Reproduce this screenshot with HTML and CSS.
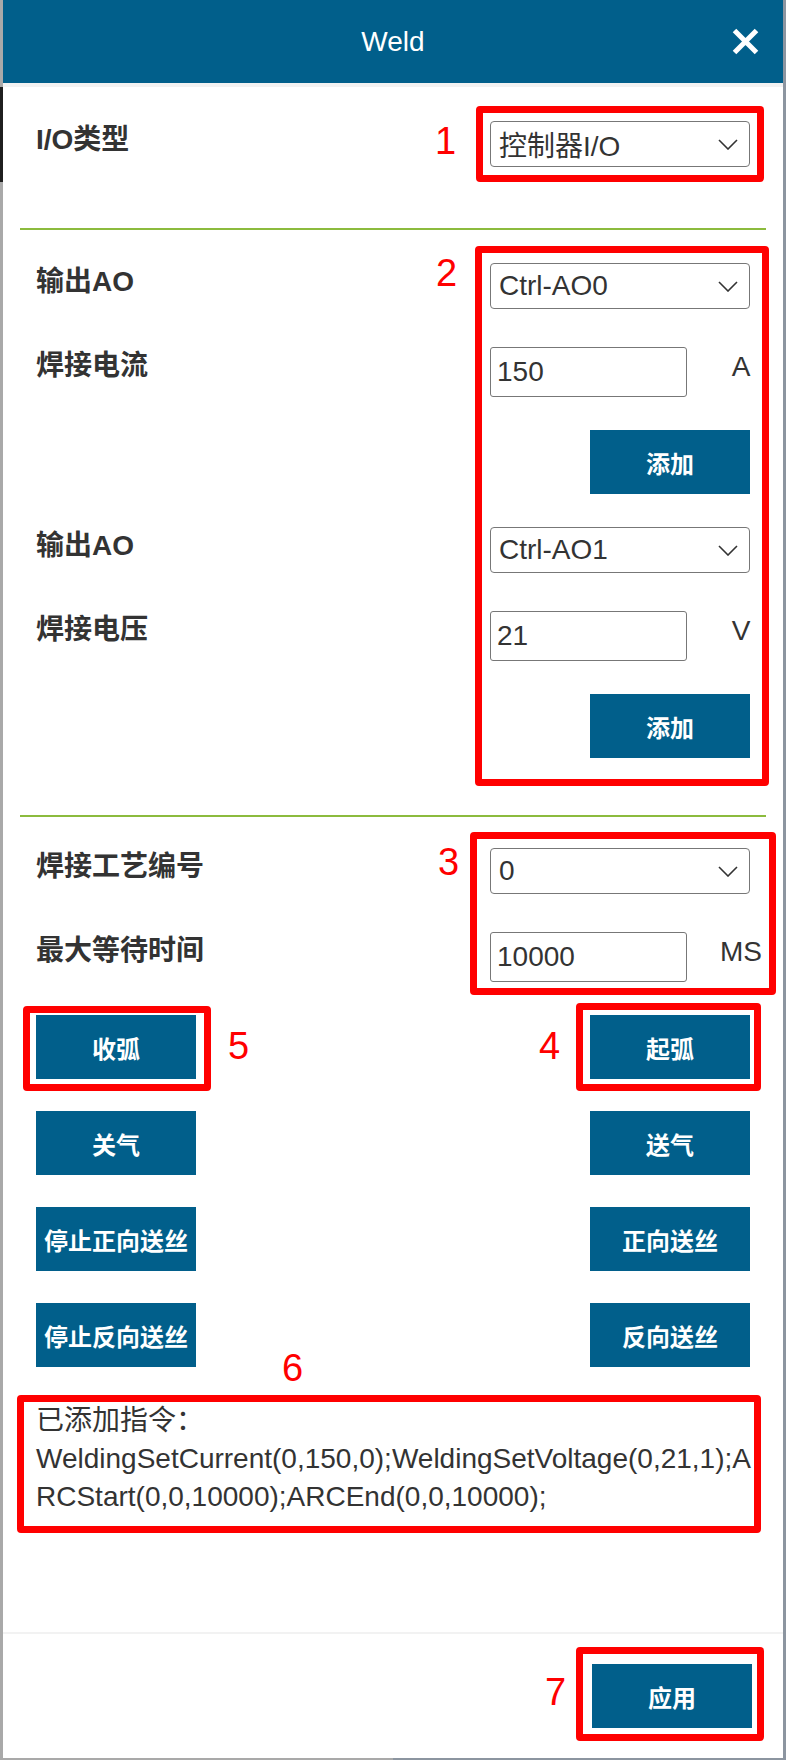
FILE: index.html
```html
<!DOCTYPE html>
<html lang="zh-CN">
<head>
<meta charset="utf-8">
<title>Weld</title>
<link rel="stylesheet" href="styles.css">
</head>
<body>
<div class="page">
  <div class="modal">
    <header class="modal-header">
      <h1 class="title">Weld</h1>
      <button class="close" aria-label="关闭">
        <svg width="27" height="27" viewBox="0 0 27 27"><path d="M2.5 2.5 L24.5 24.5 M24.5 2.5 L2.5 24.5" stroke="#fff" stroke-width="5" fill="none"/></svg>
      </button>
    </header>

    <main class="modal-body">
      <section class="sec sec-io">
        <div class="row">
          <label class="label">I/O类型</label>
          <div class="field">
            <div class="select"><span>控制器I/O</span><svg class="chev" width="20" height="11" viewBox="0 0 20 11"><polyline points="1,1 10,10 19,1" fill="none" stroke="#333" stroke-width="1.6"/></svg></div>
          </div>
        </div>
      </section>

      <hr class="divider">

      <section class="sec sec-ao">
        <div class="row r-sel">
          <label class="label">输出AO</label>
          <div class="field">
            <div class="select"><span>Ctrl-AO0</span><svg class="chev" width="20" height="11" viewBox="0 0 20 11"><polyline points="1,1 10,10 19,1" fill="none" stroke="#333" stroke-width="1.6"/></svg></div>
          </div>
        </div>
        <div class="row r-inp">
          <label class="label">焊接电流</label>
          <div class="field field-inp">
            <input class="input" type="text" value="150">
            <span class="unit">A</span>
          </div>
        </div>
        <div class="row r-act">
          <button class="btn">添加</button>
        </div>
        <div class="row r-sel">
          <label class="label">输出AO</label>
          <div class="field">
            <div class="select"><span>Ctrl-AO1</span><svg class="chev" width="20" height="11" viewBox="0 0 20 11"><polyline points="1,1 10,10 19,1" fill="none" stroke="#333" stroke-width="1.6"/></svg></div>
          </div>
        </div>
        <div class="row r-inp">
          <label class="label">焊接电压</label>
          <div class="field field-inp">
            <input class="input" type="text" value="21">
            <span class="unit">V</span>
          </div>
        </div>
        <div class="row r-act">
          <button class="btn">添加</button>
        </div>
      </section>

      <hr class="divider">

      <section class="sec sec-arc">
        <div class="row r-sel">
          <label class="label">焊接工艺编号</label>
          <div class="field">
            <div class="select"><span>0</span><svg class="chev" width="20" height="11" viewBox="0 0 20 11"><polyline points="1,1 10,10 19,1" fill="none" stroke="#333" stroke-width="1.6"/></svg></div>
          </div>
        </div>
        <div class="row r-inp">
          <label class="label">最大等待时间</label>
          <div class="field field-inp">
            <input class="input" type="text" value="10000">
            <span class="unit">MS</span>
          </div>
        </div>

        <div class="btn-grid">
          <div class="btn-pair"><button class="btn">收弧</button><button class="btn">起弧</button></div>
          <div class="btn-pair"><button class="btn">关气</button><button class="btn">送气</button></div>
          <div class="btn-pair"><button class="btn">停止正向送丝</button><button class="btn">正向送丝</button></div>
          <div class="btn-pair"><button class="btn">停止反向送丝</button><button class="btn">反向送丝</button></div>
        </div>

        <div class="cmd">已添加指令：<br>WeldingSetCurrent(0,150,0);WeldingSetVoltage(0,21,1);ARCStart(0,0,10000);ARCEnd(0,0,10000);</div>
      </section>
    </main>

    <footer class="modal-footer">
      <button class="btn">应用</button>
    </footer>
  </div>

  <div class="annotations" aria-hidden="true">
    <div class="mark m1"></div>
    <div class="mark m2"></div>
    <div class="mark m3"></div>
    <div class="mark m4"></div>
    <div class="mark m5"></div>
    <div class="mark m6"></div>
    <div class="mark m7"></div>
    <span class="num n1">1</span>
    <span class="num n2">2</span>
    <span class="num n3">3</span>
    <span class="num n4">4</span>
    <span class="num n5">5</span>
    <span class="num n6">6</span>
    <span class="num n7">7</span>
  </div>
</div>
</body>
</html>
```

FILE: styles.css
```css
* { box-sizing: border-box; }

html, body {
  margin: 0;
  padding: 0;
}

body {
  width: 786px;
  height: 1760px;
  overflow: hidden;
  font-family: "Liberation Sans", "Noto Sans CJK SC", sans-serif;
  color: #333;
  background:
    linear-gradient(#1f1f1f, #1f1f1f) 0 87px / 3px 95px no-repeat,
    linear-gradient(to right, #a9a9a9 0 393px, #8c95a0 393px);
}

.page {
  position: relative;
  width: 786px;
  height: 1760px;
}

.modal {
  margin-left: 3px;
  width: 780px;
  height: 1758px;
  background: #fff;
  display: flex;
  flex-direction: column;
}

/* header */
.modal-header {
  flex: none;
  height: 87px;
  background: #015f8b;
  border-bottom: 4px solid #f2f2f2;
  display: grid;
  grid-template-columns: 1fr auto 1fr;
  align-items: center;
}

.title {
  grid-column: 2;
  margin: 0;
  font-size: 28px;
  font-weight: normal;
  line-height: 1;
  color: #fff;
}

.close {
  grid-column: 3;
  justify-self: end;
  margin-right: 24px;
  padding: 0;
  border: 0;
  background: none;
  width: 27px;
  height: 27px;
  display: flex;
}

/* body */
.modal-body {
  flex: 1;
  min-height: 0;
  padding: 0 33px;
}

.sec-io { padding: 34px 0 61px; }
.sec-ao { padding: 33px 0 57px; }
.sec-arc { padding: 31px 0 0; }

.divider {
  height: 2px;
  margin: 0 -16px;
  border: 0;
  background: #8cbb3d;
}

.row {
  display: flex;
  justify-content: space-between;
  align-items: flex-start;
}

.r-sel { margin-bottom: 38px; }
.r-inp { margin-bottom: 33px; }
.r-act { margin-bottom: 33px; justify-content: flex-end; }
.sec-ao .row:last-child { margin-bottom: 0; }

.label {
  font-size: 28px;
  font-weight: bold;
  line-height: 38px;
  color: #333;
}

.field {
  width: 260px;
  flex: none;
}

.select {
  height: 46px;
  border: 1.5px solid #777;
  border-radius: 4px;
  padding: 0 11px 0 8px;
  display: flex;
  align-items: center;
  justify-content: space-between;
  font-size: 28px;
  color: #333;
}

.chev { flex: none; }

.field-inp {
  display: flex;
  align-items: flex-start;
}

.input {
  flex: none;
  width: 197px;
  height: 50px;
  margin: 0;
  border: 1.5px solid #777;
  border-radius: 3px;
  padding: 0 6px;
  font: inherit;
  font-size: 28px;
  color: #333;
  background: #fff;
}

.unit {
  flex: none;
  width: 80px;
  margin-left: 14px;
  text-align: center;
  font-size: 28px;
  line-height: 38px;
  padding-top: 1px;
  color: #333;
}

.btn {
  width: 160px;
  height: 64px;
  padding: 0;
  border: 0;
  border-radius: 0;
  background: #015f8b;
  color: #fff;
  font-family: "Liberation Sans", "Noto Sans CJK SC", sans-serif;
  font-size: 24px;
  font-weight: bold;
  white-space: nowrap;
}

.btn-grid {
  display: flex;
  flex-direction: column;
  gap: 32px;
}

.btn-pair {
  display: flex;
  justify-content: space-between;
}

.cmd {
  margin-top: 35px;
  width: 724px;
  font-size: 28px;
  line-height: 38px;
  color: #333;
  word-break: break-all;
}

/* footer */
.modal-footer {
  flex: none;
  border-top: 2px solid #f2f2f2;
  padding: 30px 31px 30px 0;
  display: flex;
  justify-content: flex-end;
}

/* annotation overlay */
.annotations {
  position: absolute;
  inset: 0;
  pointer-events: none;
}

.mark {
  position: absolute;
  border: 7px solid #ff0000;
  border-radius: 4px;
}

.m1 { left: 476px; top: 106px; width: 288px; height: 76px; }
.m2 { left: 475px; top: 246px; width: 294px; height: 540px; }
.m3 { left: 470px; top: 832px; width: 306px; height: 163px; }
.m4 { left: 576px; top: 1003px; width: 185px; height: 88px; }
.m5 { left: 23px; top: 1006px; width: 188px; height: 85px; }
.m6 { left: 17px; top: 1395px; width: 744px; height: 138px; }
.m7 { left: 576px; top: 1647px; width: 188px; height: 94px; }

.num {
  position: absolute;
  font-family: "Liberation Sans", sans-serif;
  font-size: 38px;
  line-height: 38px;
  color: #ff0000;
}

.n1 { left: 435px; top: 122px; }
.n2 { left: 436px; top: 254px; }
.n3 { left: 438px; top: 843px; }
.n4 { left: 539px; top: 1027px; }
.n5 { left: 228px; top: 1027px; }
.n6 { left: 282px; top: 1349px; }
.n7 { left: 545px; top: 1673px; }
```
